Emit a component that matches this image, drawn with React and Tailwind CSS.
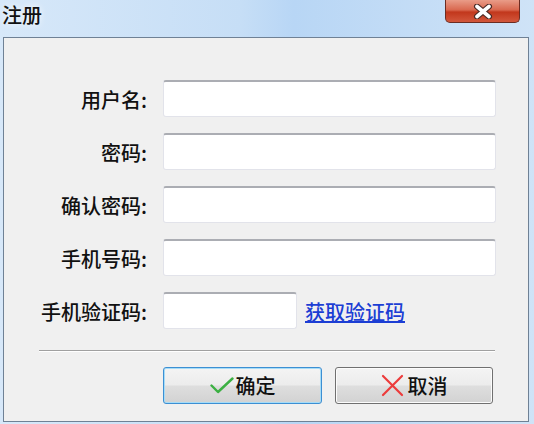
import React from "react";

const FONT = { fontFamily: '"Noto Sans CJK SC", "Noto Sans", sans-serif' };

const fields = [
  { label: "用户名:" },
  { label: "密码:" },
  { label: "确认密码:" },
  { label: "手机号码:" },
];

const TextBox = ({ className = "" }) => (
  <div
    className={`h-[37px] rounded-[3px] bg-white border border-[#e2e3ea] border-t-[#abadb3] border-t-2 ${className}`}
  />
);

const CheckIcon = () => (
  <svg width="24" height="17" viewBox="0 0 24 17" fill="none">
    <path d="M1.5 8.5 L8 15 L22.5 1.5" stroke="#3cb043" strokeWidth="2.4" strokeLinecap="round" strokeLinejoin="round" />
  </svg>
);

const CrossIcon = () => (
  <svg width="23" height="23" viewBox="0 0 23 23" fill="none">
    <path d="M2 2 L21 21 M21 2 L2 21" stroke="#ec3b3b" strokeWidth="2.2" strokeLinecap="round" />
  </svg>
);

export default function App() {
  return (
    <div
      className="w-[534px] h-[424px] flex flex-col bg-[linear-gradient(90deg,#d7e8f9_0%,#c6def6_45%,#b8d6f5_55%,#cfe3f7_100%)] overflow-hidden text-[#111]"
      style={FONT}
    >
      {/* title bar */}
      <div className="h-[37px] flex items-start justify-between">
        <span className="ml-[2px] mt-[3px] text-[20px] leading-[24px] font-medium [text-shadow:0_0_6px_#ffffff]">注册</span>
        <button className="mr-[14px] w-[75px] h-[23px] rounded-b-[5px] border border-t-0 border-[#6b2c22] bg-[linear-gradient(180deg,#e99c88_0%,#d9684f_45%,#c2371c_55%,#d2573c_100%)] flex items-center justify-center">
          <svg width="20" height="15" viewBox="0 0 20 15">
            <path d="M4 2.5 L16 12.5 M16 2.5 L4 12.5" stroke="#4a2a25" strokeWidth="6" strokeLinecap="round" />
            <path d="M4 2.5 L16 12.5 M16 2.5 L4 12.5" stroke="#ffffff" strokeWidth="3.6" strokeLinecap="round" />
          </svg>
        </button>
      </div>

      {/* client area */}
      <div className="ml-[3px] w-[526px] h-[385px] border border-[#6f8195] bg-[#f0f0f0]">
        <div className="pt-[42px] flex flex-col gap-[16px]">
          {fields.map((f) => (
            <div key={f.label} className="flex items-center">
              <span className="w-[143px] pt-[3px] text-right text-[20px] leading-[24px] font-medium">{f.label}</span>
              <TextBox className="ml-[16px] w-[333px]" />
            </div>
          ))}
          <div className="flex items-center">
            <span className="w-[143px] pt-[3px] text-right text-[20px] leading-[24px] font-medium">手机验证码:</span>
            <TextBox className="ml-[16px] w-[134px]" />
            <a className="ml-[8px] pt-[3px] text-[20px] leading-[24px] font-medium text-[#1c3ed4] underline" href="#">
              获取验证码
            </a>
          </div>
        </div>

        <div className="mt-[21px] ml-[35px] w-[456px] border-t border-t-[#a0a0a0] border-b border-b-white" />

        <div className="mt-[15px] flex gap-[13px] pl-[159px]">
          <button className="w-[159px] h-[37px] rounded-[3px] border border-[#3c8fd3] shadow-[inset_0_0_0_1px_#a6dcf7] bg-[linear-gradient(180deg,#f4f4f4_0%,#ececec_48%,#dedede_52%,#d2d2d2_100%)] flex items-center justify-center gap-[2px]">
            <CheckIcon />
            <span className="text-[20px] leading-[24px] font-medium">确定</span>
          </button>
          <button className="w-[158px] h-[37px] rounded-[3px] border border-[#707070] shadow-[inset_0_0_0_1px_#fcfcfc] bg-[linear-gradient(180deg,#f4f4f4_0%,#ececec_48%,#dedede_52%,#d2d2d2_100%)] flex items-center justify-center gap-[4px]">
            <CrossIcon />
            <span className="text-[20px] leading-[24px] font-medium">取消</span>
          </button>
        </div>
      </div>
    </div>
  );
}
